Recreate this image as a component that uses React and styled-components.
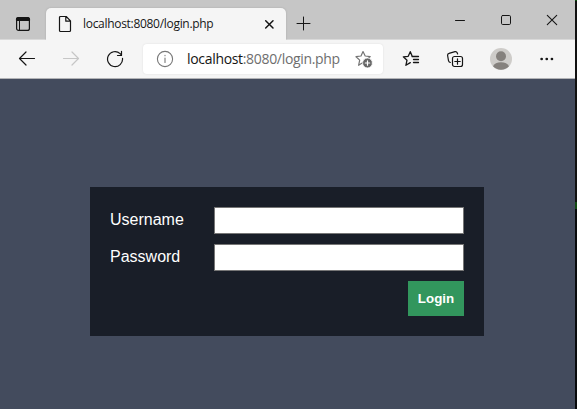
import React from "react";
import styled, { createGlobalStyle } from "styled-components";

const GlobalStyle = createGlobalStyle`
  * { box-sizing: border-box; }
  body { margin: 0; overflow: hidden; background: #0b0d10; }
`;

const Desktop = styled.div`
  display: grid;
  grid-template-columns: 575px 2px;
  width: 577px;
  height: 409px;
`;

const Edge = styled.div`
  background: linear-gradient(#0b4f0b 0 1px, #111 1px 202px, #124a12 202px 209px, #080a0c 209px);
`;

const Browser = styled.div`
  display: flex;
  flex-direction: column;
  background: #434b5d;
`;

const Icon = styled.svg`
  display: block;
  flex: none;
  width: ${(p) => p.$w || 18}px;
  height: ${(p) => p.$h || 18}px;
  margin-left: ${(p) => p.$gap || 0}px;
  fill: none;
  stroke: ${(p) => p.$color || "#151515"};
  stroke-width: ${(p) => p.$stroke || 1.2};
  stroke-linecap: round;
  stroke-linejoin: round;
`;

const TitleBar = styled.header`
  display: flex;
  flex: none;
  height: 40px;
  padding-left: 14px;
  background: #c6c6c6;
  border-bottom: 1px solid #d9d9d9;
`;

const TabActions = styled.div`
  padding-top: 15px;
  width: 32px;
`;

const Tab = styled.div`
  display: flex;
  align-items: center;
  width: 240px;
  height: 32px;
  margin-top: 8px;
  padding-left: 10px;
  background: #f5f5f5;
  border-radius: 5px 5px 0 0;
  box-shadow: 0 0 2px #a5a5a5;
  clip-path: inset(-3px -3px 0 -3px);
`;

const TabTitle = styled.span`
  width: 175px;
  margin-left: 9px;
  font: 12px/18px "Open Sans", sans-serif;
  letter-spacing: ${(p) => p.$tracking}px;
  color: #171717;
  white-space: nowrap;
`;

const NewTab = styled.div`
  padding: 15px 0 0 9px;
`;

const WindowControls = styled.div`
  display: flex;
  gap: 34px;
  margin-left: auto;
  padding: 14px 17px 0 0;
`;

const Toolbar = styled.nav`
  display: flex;
  align-items: center;
  flex: none;
  height: 39px;
  padding: 0 0 1px 18px;
  background: #f5f5f5;
  border-bottom: 1px solid #b2b3b6;
`;

const AddressBar = styled.div`
  display: flex;
  align-items: center;
  width: 240px;
  height: 30px;
  margin-left: 19px;
  padding-left: 13px;
  background: #fff;
  border-radius: 4px;
  box-shadow: 0 0 2px #ddd;
`;

const Url = styled.span`
  width: 154px;
  margin-left: 13px;
  font: 14px/20px "Open Sans", sans-serif;
  letter-spacing: ${(p) => p.$tracking}px;
  color: #6e6e6e;
  white-space: nowrap;
`;

const Host = styled.span`
  color: #151515;
`;

const Page = styled.main`
  display: flex;
  justify-content: center;
  align-items: flex-start;
  flex: 1;
  padding: 108px 1px 0 0;
`;

const LoginForm = styled.form`
  display: grid;
  grid-template-columns: 104px 250px;
  grid-template-rows: 27px 27px 35px;
  row-gap: 10px;
  width: 394px;
  height: 149px;
  padding: 20px;
  background: #191e28;
  font: 16px/26px "Liberation Sans", Arial, sans-serif;
  color: #fff;
`;

const Field = styled.input`
  width: 250px;
  height: 27px;
  padding: 1px 4px;
  background: #fff;
  border: 1px solid #767676;
  border-radius: 0;
  outline: none;
`;

const LoginButton = styled.button`
  grid-column: 2;
  justify-self: end;
  width: 56px;
  height: 35px;
  padding: 0;
  border: 0;
  background: #32965d;
  color: #fff;
  font: bold 13.333px "Liberation Sans", Arial, sans-serif;
`;

const star = "M8 1.5 10.2 6l5 .6-3.8 3.4 1.2 5L8 12.6l-4.4 2.7 1.1-5.2L1 6.7 6 6Z";

export default function App() {
  return (
    <>
      <GlobalStyle />
      <Desktop>
        <Browser>
          <TitleBar>
            <TabActions>
              <Icon viewBox="0 0 18 18">
                <rect x="2.6" y="2.6" width="12.8" height="12.8" rx="2" />
                <path d="M2.5 4.5Q2.5 2.5 4.5 2.5h9q2 0 2 2v.8h-13Z" fill="#151515" />
                <path d="M5.5 6v9" strokeWidth="1" />
              </Icon>
            </TabActions>
            <Tab>
              <Icon viewBox="0 0 18 18">
                <path d="M4.5 1.5h5.7l4.3 4.3v9.7q0 1-1 1h-9q-1 0-1-1v-13q0-1 1-1ZM9.8 1.8v4.4h4.4" />
              </Icon>
              <TabTitle $tracking={-0.3}>localhost:8080/login.php</TabTitle>
              <Icon $w={16} $h={16} $gap={3} $stroke={1.5} viewBox="0 0 16 16">
                <path d="m4.7 4.7 7.3 7.3M12 4.7 4.7 12" />
              </Icon>
            </Tab>
            <NewTab>
              <Icon $stroke={1} viewBox="0 0 18 18">
                <path d="M8.5 2v13M2 8.5h13" />
              </Icon>
            </NewTab>
            <WindowControls>
              <Icon $w={12} $h={12} $stroke={1} viewBox="0 0 12 12">
                <path d="M1.5 6.5h9" />
              </Icon>
              <Icon $w={12} $h={12} $stroke={1} viewBox="0 0 12 12">
                <rect x="1.5" y="1.5" width="9" height="9" rx="1.2" />
              </Icon>
              <Icon $w={12} $h={12} $stroke={1.1} viewBox="0 0 12 12">
                <path d="m1.3 1.3 9.4 9.4M10.7 1.3l-9.4 9.4" />
              </Icon>
            </WindowControls>
          </TitleBar>
          <Toolbar>
            <Icon viewBox="0 0 18 18">
              <path d="M16.5 8.5h-15M8 2 1.5 8.5 8 15" />
            </Icon>
            <Icon $gap={26} $color="#c6c6c6" viewBox="0 0 18 18">
              <path d="M1.5 8.5h15M10 2l6.5 6.5L10 15" />
            </Icon>
            <Icon $gap={26} viewBox="0 0 18 18">
              <path d="M16.5 8.3a7.5 7.5 0 1 1-2.4-4.7L15.5 5M15.5 1.3V5.5H11.5" />
            </Icon>
            <AddressBar>
              <Icon $color="#777" $stroke={1.1} viewBox="0 0 18 18">
                <circle cx="9" cy="9" r="7.6" />
                <path d="M9 8v4.5M9 5.4v.3" />
              </Icon>
              <Url $tracking={-0.32}>
                <Host>localhost</Host>:8080/login.php
              </Url>
              <Icon $w={20} $h={18} $gap={13} $color="#747474" viewBox="-1 0 20 18">
                <path d={star} />
                <circle cx="12.5" cy="13" r="4.9" fill="#666" stroke="#fff" strokeWidth=".7" />
                <path d="M12.5 10.8v4.4M10.3 13h4.4" stroke="#fff" />
              </Icon>
            </AddressBar>
            <Icon $gap={19} $stroke={1.3} viewBox="0 0 18 18">
              <path d="M10 5.8 8.3 1.7 6.2 6.3l-4.9.5 3.7 3.4-1.1 5.1L8.3 12.6M10 6.5h6.5M11.5 9.5h5M11.5 12.5h5" />
            </Icon>
            <Icon $gap={26} viewBox="0 0 18 18">
              <path d="M4.3 12.5Q2.8 12 2.5 10.6L1.6 5.5Q1.4 3.8 3 3.4L9 1.7q1.7-.3 2.3 1.3l.3 1" />
              <rect x="6.5" y="6.5" width="10" height="10" rx="2" />
              <path d="M11.5 8.8v5.4M8.8 11.5h5.4" />
            </Icon>
            <Icon $w={22} $h={22} $gap={26} viewBox="0 0 22 22">
              <circle cx="11" cy="11" r="11" fill="#ceccc9" stroke="none" />
              <circle cx="11" cy="8.2" r="5" fill="#85817d" stroke="none" />
              <path d="M3 18.3Q5 14.2 11 14.2t8 4.1A11 11 0 0 1 3 18.3Z" fill="#85817d" stroke="none" />
            </Icon>
            <Icon $gap={26} viewBox="0 0 18 18">
              <path d="M3.6 9h.1M8.7 9h.1M13.9 9h.1" strokeWidth="2.6" />
            </Icon>
          </Toolbar>
          <Page>
            <LoginForm onSubmit={(event) => event.preventDefault()}>
              <label htmlFor="username">Username</label>
              <Field id="username" type="text" />
              <label htmlFor="password">Password</label>
              <Field id="password" type="password" />
              <LoginButton type="submit">Login</LoginButton>
            </LoginForm>
          </Page>
        </Browser>
        <Edge />
      </Desktop>
    </>
  );
}
